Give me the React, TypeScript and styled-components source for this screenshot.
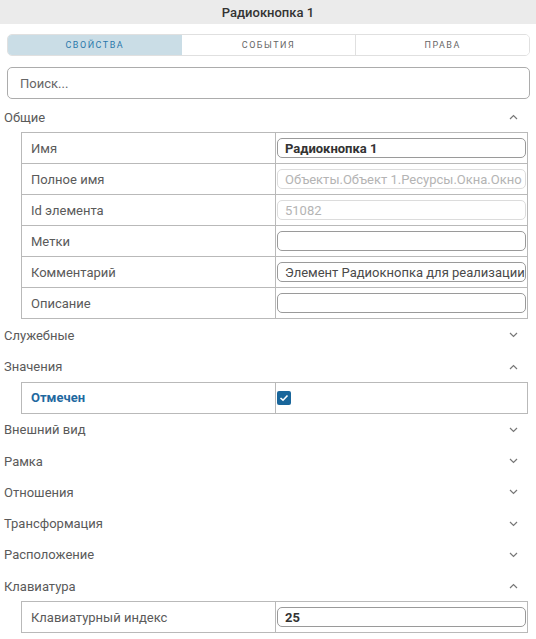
import styled, { createGlobalStyle } from 'styled-components';

const GlobalStyle = createGlobalStyle`
	html, body {
		margin: 0;
		padding: 0;
		background: #fff;
	}
	body {
		font-family: Roboto, 'Liberation Sans', Arial, sans-serif;
		color: #5a5a5a;
	}
	* {
		box-sizing: border-box;
	}
`;

interface Field {
	label: string;
	value?: string;
	kind?: 'input' | 'disabled' | 'check';
	bold?: boolean;
	accent?: boolean;
}

interface Section {
	title: string;
	open: boolean;
	fields?: Field[];
}

const sections: Section[] = [
	{
		title: 'Общие',
		open: true,
		fields: [
			{ label: 'Имя', value: 'Радиокнопка 1', bold: true },
			{ label: 'Полное имя', value: 'Объекты.Объект 1.Ресурсы.Окна.Окно', kind: 'disabled' },
			{ label: 'Id элемента', value: '51082', kind: 'disabled' },
			{ label: 'Метки', value: '' },
			{ label: 'Комментарий', value: 'Элемент Радиокнопка для реализации' },
			{ label: 'Описание', value: '' },
		],
	},
	{ title: 'Служебные', open: false },
	{
		title: 'Значения',
		open: true,
		fields: [{ label: 'Отмечен', kind: 'check', accent: true }],
	},
	{ title: 'Внешний вид', open: false },
	{ title: 'Рамка', open: false },
	{ title: 'Отношения', open: false },
	{ title: 'Трансформация', open: false },
	{ title: 'Расположение', open: false },
	{
		title: 'Клавиатура',
		open: true,
		fields: [{ label: 'Клавиатурный индекс', value: '25', bold: true }],
	},
];

const Panel = styled.div`
	width: 536px;
	display: flex;
	flex-direction: column;
`;

const Header = styled.div`
	height: 24px;
	background: #ebebeb;
	display: flex;
	align-items: center;
	justify-content: center;
	font-size: 13px;
	font-weight: 500;
	color: #333;
`;

const Body = styled.div`
	padding: 10px 6px 0 7px;
	display: flex;
	flex-direction: column;
`;

const Tabs = styled.div`
	display: grid;
	grid-template-columns: repeat(3, 1fr);
	height: 22px;
	border: 1px solid #e0e0e0;
	border-radius: 5px;
	overflow: hidden;
`;

const Tab = styled.div<{ active?: boolean }>`
	display: flex;
	align-items: center;
	justify-content: center;
	font-size: 9px;
	letter-spacing: 1.5px;
	font-weight: 400;
	color: ${(p) => (p.active ? '#2b78ab' : '#666')};
	background: ${(p) => (p.active ? '#cadde6' : '#fff')};
	border-left: ${(p) => (p.active ? 'none' : '1px solid #e0e0e0')};

	&:nth-child(2) {
		border-left: none;
	}
`;

const Search = styled.div`
	margin-top: 11px;
	height: 32px;
	border: 1px solid #acacac;
	border-radius: 5px;
	display: flex;
	align-items: center;
	padding-left: 12px;
	font-size: 13px;
	color: #666;
`;

const List = styled.div`
	margin: 2px -6px 0 -7px;
	display: flex;
	flex-direction: column;
`;

const SectionHead = styled.div`
	height: 31.25px;
	display: flex;
	align-items: center;
	justify-content: space-between;
	padding: 1px 18px 0 4px;
	font-size: 13px;
	color: #5a5a5a;
`;

const Table = styled.div`
	margin: 0 8px 0 21px;
	border: 1px solid #b9b9b9;
	border-bottom: none;
`;

const Row = styled.div`
	display: grid;
	grid-template-columns: 254px 1fr;
	height: 31px;
	border-bottom: 1px solid #b9b9b9;
`;

const Label = styled.div<{ accent?: boolean }>`
	display: flex;
	align-items: center;
	padding-left: 9px;
	border-right: 1px solid #b9b9b9;
	font-size: 13px;
	font-weight: ${(p) => (p.accent ? 700 : 400)};
	color: ${(p) => (p.accent ? '#1f69a0' : '#5a5a5a')};
`;

const Value = styled.div`
	display: flex;
	align-items: center;
	padding: 0 1px 0 1px;
`;

const Input = styled.div<{ disabled?: boolean; bold?: boolean }>`
	flex: 1;
	height: 20px;
	border: 1px solid ${(p) => (p.disabled ? '#dcdcdc' : '#9a9a9a')};
	border-radius: 5px;
	display: flex;
	align-items: center;
	padding-left: 7px;
	font-size: 13px;
	white-space: nowrap;
	overflow: hidden;
	font-weight: ${(p) => (p.bold ? 700 : 400)};
	color: ${(p) => (p.disabled ? '#b4b4b4' : p.bold ? '#333' : '#4a4a4a')};
`;

const Check = styled.div`
	width: 14px;
	height: 14px;
	border-radius: 2px;
	background: #19669b;
	display: flex;
	align-items: center;
	justify-content: center;
`;

function Chevron({ open }: { open: boolean }) {
	return (
		<svg width="9" height="6" viewBox="0 0 9 6">
			<polyline
				points={open ? '1,5 4.5,1.5 8,5' : '1,1 4.5,4.5 8,1'}
				fill="none"
				stroke="#777"
				strokeWidth="1.2"
			/>
		</svg>
	);
}

function FieldRow({ field }: { field: Field }) {
	return (
		<Row>
			<Label accent={field.accent}>{field.label}</Label>
			<Value>
				{field.kind === 'check' ? (
					<Check>
						<svg width="10" height="8" viewBox="0 0 10 8">
							<polyline points="1.5,4 4,6.2 8.5,1.5" fill="none" stroke="#fff" strokeWidth="1.6" />
						</svg>
					</Check>
				) : (
					<Input disabled={field.kind === 'disabled'} bold={field.bold}>
						{field.value}
					</Input>
				)}
			</Value>
		</Row>
	);
}

export default function App() {
	return (
		<Panel>
			<GlobalStyle />
			<Header>Радиокнопка 1</Header>
			<Body>
				<Tabs>
					<Tab active>СВОЙСТВА</Tab>
					<Tab>СОБЫТИЯ</Tab>
					<Tab>ПРАВА</Tab>
				</Tabs>
				<Search>Поиск...</Search>
				<List>
					{sections.map((s) => (
						<div key={s.title}>
							<SectionHead>
								<span>{s.title}</span>
								<Chevron open={s.open} />
							</SectionHead>
							{s.open && s.fields && (
								<Table>
									{s.fields.map((f) => (
										<FieldRow key={f.label} field={f} />
									))}
								</Table>
							)}
						</div>
					))}
				</List>
			</Body>
		</Panel>
	);
}
